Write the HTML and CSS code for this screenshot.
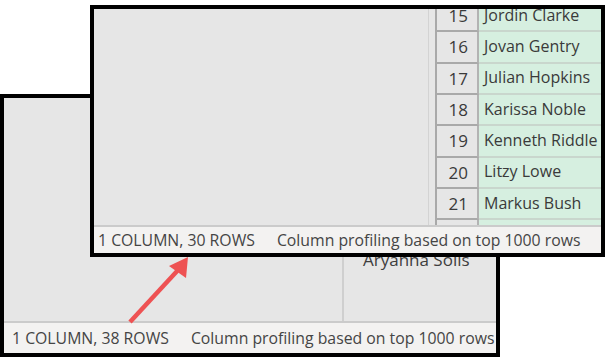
FILE: index.html
```html
<!DOCTYPE html>
<html>
<head>
<meta charset="utf-8">
<link rel="stylesheet" href="styles.css">
</head>
<body>
<div class="desk">
  <div class="win back">
    <div class="body">
      <div class="empty back-empty"></div>
      <div class="vline"></div>
      <div class="back-col">
        <div class="back-cell">Aryanna Solis</div>
      </div>
    </div>
    <div class="status"><span>1 COLUMN, 38 ROWS</span><span class="note">Column profiling based on top 1000 rows</span></div>
  </div>

  <div class="win front">
    <div class="body">
      <div class="empty front-empty"></div>
      <div class="vline thin"></div>
      <div class="grid">
        <div class="row"><div class="num">15</div><div class="name">Jordin Clarke</div></div>
        <div class="row"><div class="num">16</div><div class="name">Jovan Gentry</div></div>
        <div class="row"><div class="num">17</div><div class="name">Julian Hopkins</div></div>
        <div class="row"><div class="num">18</div><div class="name">Karissa Noble</div></div>
        <div class="row"><div class="num">19</div><div class="name">Kenneth Riddle</div></div>
        <div class="row"><div class="num">20</div><div class="name">Litzy Lowe</div></div>
        <div class="row"><div class="num">21</div><div class="name">Markus Bush</div></div>
        <div class="row"><div class="num">22</div><div class="name">Mason Reid</div></div>
      </div>
    </div>
    <div class="status"><span>1 COLUMN, 30 ROWS</span><span class="note">Column profiling based on top 1000 rows</span></div>
  </div>

  <svg class="arrow" width="608" height="358" viewBox="0 0 608 358">
    <line x1="130" y1="322" x2="179" y2="269" stroke="#ee5253" stroke-width="4.5" stroke-linecap="butt"/>
    <polygon points="188,257 169,266 186,278" fill="#ee5253"/>
  </svg>
</div>
</body>
</html>
```

FILE: styles.css
```css
html, body {
  margin: 0;
  padding: 0;
  background: #ffffff;
}

body {
  font-family: "Open Sans", "Noto Sans", "DejaVu Sans", sans-serif;
  color: #3b3b3b;
}

.desk {
  position: relative;
  width: 608px;
  height: 358px;
  overflow: hidden;
  background: #ffffff;
}

.win {
  position: absolute;
  box-sizing: border-box;
  border: 4px solid #000000;
  background: #e6e6e6;
  display: flex;
  flex-direction: column;
}

.back {
  left: 0;
  top: 94px;
  width: 500px;
  height: 263px;
}

.front {
  left: 90px;
  top: 5px;
  width: 515px;
  height: 252px;
}

.body {
  flex: 1;
  display: flex;
  overflow: hidden;
  min-height: 0;
}

.empty {
  flex: none;
}

.back-empty {
  width: 338px;
}

.front-empty {
  width: 334px;
}

.vline {
  flex: none;
  width: 2px;
  background: #cfcfcf;
}

.vline.thin {
  width: 1px;
  background: #d3d3d3;
  margin-right: 6px;
}

.back-col {
  flex: 1;
  display: flex;
  flex-direction: column;
  padding-top: 151px;
}

.back-cell {
  padding-left: 19px;
  font-size: 17px;
  line-height: 22px;
  color: #3e3e3e;
  white-space: nowrap;
}

.grid {
  flex: 1;
  display: flex;
  flex-direction: column;
  margin-top: -8px;
  border-left: 2px solid #a9a9a9;
}

.row {
  display: flex;
  flex: none;
  height: 31.33px;
  font-size: 16px;
}

.num {
  box-sizing: border-box;
  width: 42px;
  flex: none;
  padding-right: 9px;
  font-size: 17px;
  display: flex;
  align-items: center;
  justify-content: flex-end;
  border-bottom: 2px solid #a9a9a9;
  border-right: 2px solid #b3b3b3;
  color: #3a3a3a;
}

.name {
  flex: 1;
  box-sizing: border-box;
  background: #d6efe0;
  border-bottom: 2px solid #c9d6cd;
  padding-left: 5px;
  padding-bottom: 2px;
  display: flex;
  align-items: center;
  white-space: nowrap;
  overflow: hidden;
  color: #3a3a3a;
}

.status {
  flex: none;
  box-sizing: border-box;
  border-top: 2px solid #cbcbcb;
  background: #f3f2f1;
  display: flex;
  align-items: center;
  color: #454545;
  font-size: 15.8px;
  white-space: nowrap;
  overflow: hidden;
}

.back .status {
  height: 32px;
  padding-left: 8px;
}

.front .status {
  height: 28px;
  padding-left: 4px;
}

.status .note {
  margin-left: 22px;
}

.arrow {
  position: absolute;
  left: 0;
  top: 0;
  pointer-events: none;
}
```
